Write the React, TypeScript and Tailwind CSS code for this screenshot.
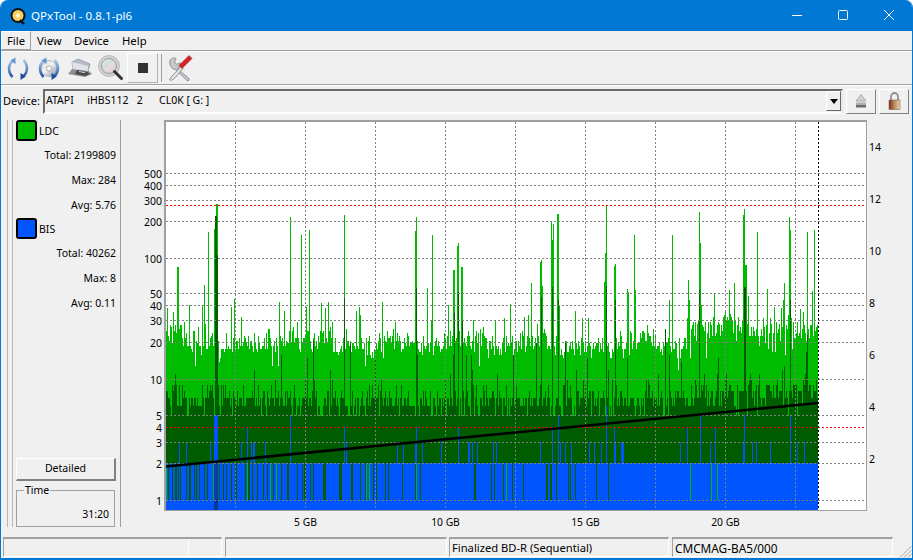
import React from "react";

const CHART_L = 166;
const CHART_R = 818;
const GB_LINES = [235.5, 305.5, 375.5, 445.5, 515.5, 585.5, 655.5, 725.5, 795.5];
const LEFT_TICKS: [string, number][] = [
  ["1", 500.5], ["2", 463.5], ["3", 442.5], ["4", 427.5], ["5", 415.5], ["10", 379.5], ["20", 342.5],
  ["30", 320.5], ["40", 305.5], ["50", 293.5], ["100", 258.5], ["200", 221.5], ["300", 200.5], ["400", 185.5], ["500", 173.5],
];
const RIGHT_TICKS: [string, number][] = [["14", 147], ["12", 199], ["10", 251], ["8", 303], ["6", 355], ["4", 407], ["2", 459]];

// tall LDC spikes read off the reference: [x, top y]
const SPIKES: [number, number][] = [
  [167, 308], [177, 267], [178, 267], [189, 305], [204, 285], [208, 232], [214, 229], [215, 229], [216, 204], [217, 204],
  [231, 307], [234, 299], [279, 302], [290, 217], [301, 235], [306, 307], [309, 230], [328, 302], [344, 215], [382, 302],
  [415, 231], [416, 217], [427, 288], [432, 235], [448, 305], [453, 270], [454, 270], [457, 246], [458, 243], [461, 267], [462, 267],
  [531, 283], [540, 262], [541, 260], [542, 286], [551, 221], [552, 240], [553, 224], [557, 214], [558, 214], [559, 305],
  [604, 282], [605, 253], [606, 206], [614, 266], [615, 264], [627, 289], [628, 292], [634, 235], [635, 290],
  [669, 300], [672, 235], [688, 280], [689, 300], [699, 212], [700, 243], [734, 283], [743, 215], [744, 209], [745, 265], [746, 265],
  [748, 296], [757, 232], [767, 289], [783, 300], [784, 283], [789, 217], [790, 230], [807, 232], [812, 291], [814, 230],
];
const BLUE_TALL: [number, number][] = [
  [216, 391], [247, 427], [290, 415], [344, 427], [416, 427], [458, 427], [552, 427], [558, 415], [606, 406], [614, 427],
  [687, 427], [700, 415], [715, 427], [744, 415], [790, 415],
];
const DARK_TALL: [number, number][] = [
  [215, 216], [216, 216], [217, 255], [344, 298], [416, 288], [454, 313], [458, 292], [462, 320], [541, 297], [552, 287],
  [558, 300], [606, 286], [615, 300], [635, 327], [699, 290], [744, 287], [745, 287], [790, 300], [807, 335],
];

function rng(seed: number) {
  return () => {
    seed = (seed + 0x6d2b79f5) | 0;
    let t = Math.imul(seed ^ (seed >>> 15), 1 | seed);
    t = (t + Math.imul(t ^ (t >>> 7), 61 | t)) ^ t;
    return ((t ^ (t >>> 14)) >>> 0) / 4294967296;
  };
}

const logY = (v: number) => 500.5 - Math.log10(v) * 121;
const snap = (y: number) => Math.round(logY(Math.max(1, Math.round(Math.pow(10, (500.5 - y) / 121)))));
const col = (x: number, top: number, bottom: number) => `M${x} ${top}H${x + 1}V${bottom}H${x}Z`;

function buildChart() {
  const r = rng(20240);
  let light = "", dark = "", blue = "", stripeDark = "", stripeLight = "", gapLight = "";
  const spike = new Map(SPIKES);
  const blueTall = new Map(BLUE_TALL);
  const darkTall = new Map(DARK_TALL);
  let slow = 0;
  for (let x = CHART_L; x < CHART_R; x++) {
    slow += (r() - 0.5) * 5;
    slow *= 0.93;
    const base = x > 690 ? 328 : x < 190 ? 335 : 344;
    let y = base + slow + (r() - 0.5) * 20;
    const k = r();
    if (k < 0.07) y -= 10 + r() * 24;
    else if (k < 0.12) y += 8 + r() * 16;
    y = snap(y);
    const s = spike.get(x);
    if (s !== undefined) y = Math.min(y, s);
    light += col(x, y, 510);

    // dark green: stepped levels, solid below 5
    const d = r();
    const high = x > 690 || x < 186;
    let lvl = d < 0.12 ? 5 : d < 0.42 ? 6 : d < 0.78 ? 7 : d < 0.92 ? 8 : d < 0.97 ? 9 : 10;
    if (high && r() < 0.5) lvl += 2;
    let dy = Math.round(logY(lvl));
    if (r() < 0.07) dy = snap(380 - r() * 50);
    const t = darkTall.get(x);
    if (t !== undefined) dy = t;
    dark += col(x, dy, 463);
    if (lvl === 5) gapLight += col(x, dy, 416);

    // blue columns rising out of the dark zone
    if (x >= 214 && x <= 217) blue += col(x, 415, 463);
    else if (blueTall.has(x)) blue += col(x, blueTall.get(x) as number, 463);
    else if (r() < (x < 420 ? 0.07 : 0.09)) blue += col(x, 442, 463);

    // stripes that cut into the solid blue between 2 and 1
    const p = x < 370 ? 0.24 : x < 620 ? 0.13 : 0.025;
    if ((x < 214 || x > 217) && r() < p) {
      if (r() < (x < 620 ? 0.9 : 0.3)) stripeDark += col(x, 463, 500);
      else stripeLight += col(x, 463, 500);
    }
  }
  return { light, dark, blue, stripeDark, stripeLight, gapLight };
}

const chart = buildChart();

function Chart() {
  return (
    <svg viewBox="121 116 791 420" width={791} height={420} className="block" shapeRendering="crispEdges">
      <rect x={166} y={122} width={700} height={388} fill="#ffffff" />
      <path d={chart.light} fill="#00bc00" />
      <path d={chart.dark} fill="#005c00" />
      <path d={chart.gapLight} fill="#00bc00" />
      <rect x={CHART_L} y={463} width={CHART_R - CHART_L} height={47} fill="#0055ff" />
      <path d={chart.blue} fill="#0055ff" />
      <path d={chart.stripeDark} fill="#005c00" />
      <path d={chart.stripeLight} fill="#00bc00" />
      <rect x={214} y={463} width={4} height={37} fill="#0a3ca8" />
      <rect x={214} y={500} width={4} height={10} fill="#023a94" />
      {LEFT_TICKS.filter(([t]) => t !== "4").map(([, y]) => (
        <line key={y} x1={166} x2={866} y1={y} y2={y} stroke="#808080" strokeDasharray="2 2" />
      ))}
      {GB_LINES.map((x) => (
        <line key={x} x1={x} x2={x} y1={122} y2={510} stroke="#808080" strokeDasharray="2 2" />
      ))}
      <line x1={166} x2={866} y1={205.5} y2={205.5} stroke="#ff0000" strokeDasharray="2 2" />
      <line x1={166} x2={866} y1={427.5} y2={427.5} stroke="#ff0000" strokeDasharray="2 2" />
      <line x1={818.5} x2={818.5} y1={122} y2={510} stroke="#000000" strokeDasharray="2 2" />
      <line x1={166} x2={818} y1={466.5} y2={403} stroke="#000000" strokeWidth={2.6} shapeRendering="auto" />
      <rect x={165} y={121} width={701.5} height={389.5} fill="none" stroke="#a0a0a0" strokeWidth={1.5} />
      <g fill="#000000" fontFamily="'Noto Sans', sans-serif" shapeRendering="auto">
        <g fontSize={10.5}>
          {LEFT_TICKS.map(([t, y]) => (
            <text key={t} x={162} y={y + 4} textAnchor="end">{t}</text>
          ))}
          {RIGHT_TICKS.map(([t, y]) => (
            <text key={t} x={869} y={y + 4}>{t}</text>
          ))}
        </g>
        <g fontSize={10.3}>
          <text x={305.5} y={526} textAnchor="middle">5 GB</text>
          <text x={445.5} y={526} textAnchor="middle">10 GB</text>
          <text x={585.5} y={526} textAnchor="middle">15 GB</text>
          <text x={725.5} y={526} textAnchor="middle">20 GB</text>
        </g>
      </g>
    </svg>
  );
}

function AppIcon() {
  return (
    <svg width={18} height={18} viewBox="0 0 18 18">
      <circle cx={9} cy={8.5} r={7.5} fill="#111111" />
      <circle cx={9} cy={8.5} r={5.5} fill="#f6cf63" />
      <circle cx={9} cy={8.5} r={2} fill="#fff7dc" />
      <path d="M11 13l4 4" stroke="#111111" strokeWidth={2.4} />
    </svg>
  );
}

function Arcs({ id }: { id: string }) {
  return (
    <>
      <defs>
        <linearGradient id={id} x1="0" y1="0" x2="0" y2="1">
          <stop offset="0" stopColor="#a9cbee" />
          <stop offset="1" stopColor="#23519f" />
        </linearGradient>
      </defs>
      <path d="M8 4.5C2.5 7 1 15 6.5 21" fill="none" stroke={`url(#${id})`} strokeWidth={2.6} />
      <path d="M9.5 1.5L9.5 8L4.5 4.5Z" fill="#5f93d6" />
      <path d="M16 21C21.5 18 23 10 17.5 4" fill="none" stroke={`url(#${id})`} strokeWidth={2.6} />
      <path d="M14.5 24L14.5 17L19.8 20.5Z" fill="#1f4d9c" />
    </>
  );
}

function RefreshIcon() {
  return (
    <svg width={24} height={25} viewBox="0 0 24 25"><Arcs id="arcA" /></svg>
  );
}

function DiscRefreshIcon() {
  return (
    <svg width={24} height={25} viewBox="0 0 24 25">
      <defs>
        <linearGradient id="discA" x1="0" y1="0" x2="1" y2="1">
          <stop offset="0" stopColor="#d8d8d8" />
          <stop offset="0.45" stopColor="#f2f2f2" />
          <stop offset="0.7" stopColor="#b9c4d0" />
          <stop offset="1" stopColor="#8f8f8f" />
        </linearGradient>
      </defs>
      <circle cx={12} cy={12.5} r={8} fill="url(#discA)" stroke="#9a9a9a" strokeWidth={0.6} />
      <circle cx={12} cy={12.5} r={2.6} fill="#fafafa" stroke="#8a8a8a" strokeWidth={0.7} />
      <Arcs id="arcB" />
    </svg>
  );
}

function DriveIcon() {
  return (
    <svg width={26} height={22} viewBox="0 0 26 22">
      <path d="M1 17l17 3 7-3-3-3L5 12z" fill="#6f6f6f" opacity={0.75} />
      <path d="M5 5L11 2l12 5-2 7L6 12z" fill="#b4bcc6" stroke="#7c8490" strokeWidth={0.6} />
      <path d="M5 5l16 4v5L6 12z" fill="#dfe3e8" />
      <path d="M10 13l10 2 3 2-5 2-10-2z" fill="#4a4a4a" />
      <path d="M12 14.5l6 1.2" stroke="#d7d7d7" strokeWidth={1} />
    </svg>
  );
}

function SearchDiscIcon() {
  return (
    <svg width={26} height={26} viewBox="0 0 26 26">
      <defs>
        <linearGradient id="discB" x1="0" y1="0" x2="1" y2="1">
          <stop offset="0" stopColor="#f6f6f6" />
          <stop offset="0.35" stopColor="#cfe0d2" />
          <stop offset="0.55" stopColor="#e8d8e2" />
          <stop offset="1" stopColor="#cfcfcf" />
        </linearGradient>
      </defs>
      <circle cx={11} cy={11} r={10.5} fill="#d2d2d2" stroke="#a0a0a0" strokeWidth={0.6} />
      <circle cx={11} cy={11} r={7.5} fill="url(#discB)" stroke="#8c8c8c" strokeWidth={0.8} />
      <path d="M16.5 16.5l7 7" stroke="#333333" strokeWidth={3} strokeLinecap="round" />
    </svg>
  );
}

function ToolsIcon() {
  return (
    <svg width={26} height={28} viewBox="0 0 26 28">
      <path d="M3 6c2-2.5 5-2.5 6-1.5L7.5 8l2.2 2.4 3.4-1.6c1 2.5-.5 5-3 5.6L22 24.5c1 1.2-.8 3-2 2L8.5 15.5C5 16 1.5 10 3 6z" fill="#c4c8cc" stroke="#6f7479" strokeWidth={0.7} />
      <path d="M14 12.5L5 22l-2.5 3.5 1.5 1L8 24l8-9.5z" fill="#dfe1e3" stroke="#6f7479" strokeWidth={0.7} />
      <path d="M25 4.5l-3-3L12 11.5l3 3z" fill="#d72222" stroke="#8e1414" strokeWidth={0.5} />
    </svg>
  );
}

function EjectIcon() {
  return (
    <svg width={12} height={14} viewBox="0 0 12 14">
      <path d="M6 0.5L11 7H1Z" fill="#d0d0d0" stroke="#9a9a9a" strokeWidth={0.7} />
      <rect x={1} y={8.5} width={10} height={1.5} fill="#b0b0b0" />
      <rect x={1} y={10.5} width={10} height={3} fill="#6c6c6c" />
    </svg>
  );
}

function LockIcon() {
  return (
    <svg width={13} height={18} viewBox="0 0 13 18">
      <defs>
        <linearGradient id="lockFill" x1="0" y1="0" x2="1" y2="0">
          <stop offset="0" stopColor="#7a2c18" />
          <stop offset="0.5" stopColor="#b98a5c" />
          <stop offset="1" stopColor="#e9d6b0" />
        </linearGradient>
      </defs>
      <path d="M3 8V4.5a3.5 3.5 0 0 1 7 0V8" fill="none" stroke="#8f8f8f" strokeWidth={1.8} />
      <rect x={1} y={8} width={11} height={9.5} fill="url(#lockFill)" stroke="#7a5a40" strokeWidth={0.5} />
    </svg>
  );
}

function Stat({ label, value }: { label: string; value: string }) {
  return <div className="h-[25px] leading-[25px] text-right">{label}: {value}</div>;
}

function Legend({ color, label }: { color: string; label: string }) {
  return (
    <div className="h-[23px] flex items-start">
      <span className={`w-[21px] h-[21px] rounded-[3px] border-2 border-black ${color}`} />
      <span className="ml-[2px] leading-[22px]">{label}</span>
    </div>
  );
}

function StatusCell({ className, children }: { className: string; children?: React.ReactNode }) {
  return (
    <div className={`h-[20px] border-t-2 border-l border-t-[#a0a0a0] border-l-[#a0a0a0] border-r border-b border-r-white border-b-white pl-[2px] leading-[18px] ${className}`}>
      {children}
    </div>
  );
}

export default function App() {
  return (
    <div className="w-[913px] h-[560px] bg-white overflow-hidden text-[10.5px] text-black font-['Noto_Sans',sans-serif]">
      <div className="w-full h-full flex flex-col bg-[#f0f0f0] border-x border-b-2 border-[#0078d4] rounded-t-lg overflow-hidden">
        {/* title bar */}
        <div className="h-[31px] shrink-0 bg-[#0078d4] flex items-center text-white">
          <div className="ml-[8px] mr-[4px] flex"><AppIcon /></div>
          <span className="text-[11.6px]">QPxTool - 0.8.1-pl6</span>
          <div className="ml-auto flex items-center">
            <svg width={46} height={31} viewBox="0 0 46 31"><path d="M18 15.5h10" stroke="#fff" shapeRendering="crispEdges" /></svg>
            <svg width={46} height={31} viewBox="0 0 46 31"><rect x={18.5} y={10.5} width={9} height={9} rx={1} fill="none" stroke="#fff" /></svg>
            <svg width={46} height={31} viewBox="0 0 46 31"><path d="M18 10l10 10M28 10L18 20" stroke="#fff" /></svg>
          </div>
        </div>

        {/* menu */}
        <div className="h-[20px] shrink-0 flex items-stretch text-[11.3px] border-b border-b-[#a0a0a0] shadow-[0_1px_0_#ffffff]">
          <span className="w-[30px] pl-[5px] leading-[18px] border-t border-l border-t-white border-l-white border-r border-b border-r-[#a0a0a0] border-b-[#a0a0a0] bg-[#f0f0f0]">File</span>
          <span className="ml-[6px] w-[25px] leading-[20px]">View</span>
          <span className="ml-[12px] w-[35px] leading-[20px]">Device</span>
          <span className="ml-[13px] leading-[20px]">Help</span>
        </div>

        {/* toolbar */}
        <div className="h-[33px] shrink-0 mt-px flex items-center border-b border-b-[#a0a0a0] shadow-[0_1px_0_#ffffff]">
          <div className="ml-[5px] flex"><RefreshIcon /></div>
          <div className="ml-[7px] flex"><DiscRefreshIcon /></div>
          <div className="ml-[6px] flex"><DriveIcon /></div>
          <div className="ml-[5px] flex"><SearchDiscIcon /></div>
          <div className="ml-[3px] w-[31px] h-[30px] flex items-center justify-center border border-t-white border-l-white border-r-[#b0b0b0] border-b-[#b0b0b0]">
            <span className="w-[10px] h-[10px] bg-[#333333]" />
          </div>
          <div className="ml-[3px] w-px h-[28px] bg-[#a0a0a0]" />
          <div className="ml-[5px] flex"><ToolsIcon /></div>
        </div>

        {/* device row */}
        <div className="h-[30px] shrink-0 mt-px flex items-center text-[11px]">
          <span className="ml-[2px] w-[40px]">Device:</span>
          <div className="w-[800px] h-[25px] flex items-center border-2 border-t-[#696969] border-l-[#696969] border-r-[#e8e8e8] border-b-white pl-px whitespace-pre text-[10.5px]">
            <span className="flex-1">ATAPI     iHBS112   2      CL0K [ G: ]</span>
            <span className="w-[15px] h-[20px] flex items-center justify-center border border-t-white border-l-white border-r-[#696969] border-b-[#696969]">
              <span className="w-0 h-0 border-x-[4px] border-x-transparent border-t-[5px] border-t-black" />
            </span>
          </div>
          <div className="ml-[3px] w-[30px] h-[25px] flex items-center justify-center border border-t-white border-l-white border-r-[#808080] border-b-[#808080]"><EjectIcon /></div>
          <div className="ml-[3px] w-[30px] h-[25px] flex items-center justify-center border border-t-white border-l-white border-r-[#808080] border-b-[#808080]"><LockIcon /></div>
        </div>

        {/* main */}
        <div className="h-[420px] shrink-0 flex">
          <div className="w-[120px] shrink-0 pl-[6px] pt-[4px] flex items-start">
            <div className="w-[6px] h-[407px] border-x border-[#b8b8b8]" />
            <div className="w-[108px] h-[407px] pl-[3px] pr-[4px] flex flex-col border-r border-r-[#a0a0a0]">
              <Legend color="bg-[#00bc00]" label="LDC" />
              <Stat label="Total" value="2199809" />
              <Stat label="Max" value="284" />
              <Stat label="Avg" value="5.76" />
              <Legend color="bg-[#0055ff]" label="BIS" />
              <Stat label="Total" value="40262" />
              <Stat label="Max" value="8" />
              <Stat label="Avg" value="0.11" />
              <button className="mt-auto w-[100px] h-[23px] text-center border border-t-white border-l-white border-r-2 border-b-2 border-r-[#808080] border-b-[#808080]">Detailed</button>
              <fieldset className="mt-[2px] w-[99px] h-[44px] border border-[#a0a0a0] px-[5px] text-right">
                <legend className="ml-[2px] px-[1px] text-left leading-[14px]">Time</legend>
                <div className="mt-[9px] leading-[16px]">31:20</div>
              </fieldset>
            </div>
          </div>
          <Chart />
        </div>

        {/* status bar */}
        <div className="h-[22px] flex pl-[2px] pt-px items-start relative">
          <StatusCell className="w-[219px] flex">
            <span className="w-[183px] border-r border-r-white h-full" />
          </StatusCell>
          <StatusCell className="ml-[3px] w-[222px]" />
          <StatusCell className="ml-[2px] w-[220px] text-[11.2px]">Finalized BD-R (Sequential)</StatusCell>
          <StatusCell className="ml-[3px] w-[221px] text-[11.8px]">CMCMAG-BA5/000</StatusCell>
          <svg width={13} height={13} viewBox="0 0 13 13" className="absolute right-0 bottom-0">
            <path d="M12.5 1L1 12.5M12.5 5L5 12.5M12.5 9L9 12.5" stroke="#a8a8a8" strokeWidth={1} />
          </svg>
        </div>
      </div>
    </div>
  );
}
